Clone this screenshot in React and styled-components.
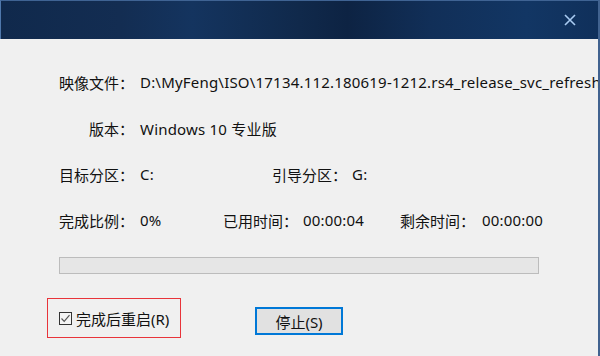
import React from 'react';
import styled, { createGlobalStyle } from 'styled-components';

const Global = createGlobalStyle`
  html, body {
    margin: 0;
    padding: 0;
    background: #f0f0f0;
  }
  body {
    font-family: "Noto Sans", "Noto Sans CJK SC", sans-serif;
    font-size: 15px;
    color: #111;
  }
`;

const Window = styled.div`
  width: 600px;
  height: 356px;
  box-sizing: border-box;
  display: flex;
  flex-direction: column;
  background: #f0f0f0;
  border-right: 2px solid #41628f;
  overflow: hidden;
`;

const TitleBar = styled.div`
  height: 39px;
  flex: none;
  box-sizing: border-box;
  display: flex;
  align-items: center;
  justify-content: flex-end;
  padding-right: 18px;
  border-top: 1px solid #3f6393;
  border-left: 1px solid #4f78ac;
  background: linear-gradient(
    90deg,
    #10294c 0%,
    #132d52 20%,
    #14345f 32%,
    #10294b 50%,
    #0d2343 58%,
    #112f58 72%,
    #123664 88%,
    #10305b 100%
  );
`;

const CloseButton = styled.button`
  width: 20px;
  height: 20px;
  padding: 0;
  border: none;
  background: transparent;
  display: flex;
  align-items: center;
  justify-content: center;
`;

const Body = styled.div`
  flex: 1;
  display: flex;
  flex-direction: column;
  padding: 20px 0 0 59px;
  overflow: hidden;
`;

const Row = styled.div`
  display: flex;
  align-items: center;
  height: 46px;
  white-space: nowrap;
`;

const Field = styled.div`
  display: flex;
  align-items: center;
  width: ${(p) => (p.$w ? `${p.$w}px` : 'auto')};
  flex: none;
`;

const Label = styled.span`
  display: inline-block;
  width: ${(p) => (p.$right ? '75px' : 'auto')};
  text-align: ${(p) => (p.$right ? 'right' : 'left')};
`;

const Value = styled.span`
  margin-left: ${(p) => p.$gap || 6}px;
  letter-spacing: 0.2px;
`;

const Progress = styled.div`
  width: 480px;
  height: 17px;
  box-sizing: border-box;
  margin-top: 14px;
  border: 1px solid #bcbcbc;
  background: #e6e6e6;
`;

const Footer = styled.div`
  display: flex;
  align-items: center;
  margin: 24px 0 0 -12px;
`;

const RestartBox = styled.label`
  width: 134px;
  height: 40px;
  box-sizing: border-box;
  border: 1px solid #e8343a;
  display: flex;
  align-items: center;
  padding-left: 11px;
  gap: 4px;
`;

const Check = styled.span`
  width: 13px;
  height: 13px;
  box-sizing: border-box;
  border: 1px solid #333;
  background: #f4f4f4;
  display: flex;
  align-items: center;
  justify-content: center;
`;

const StopButton = styled.button`
  margin-left: 74px;
  margin-top: 6px;
  width: 88px;
  height: 28px;
  box-sizing: border-box;
  border: 2px solid #0078d7;
  background: #e1e1e1;
  font-family: inherit;
  font-size: 15px;
  color: #111;
  padding: 0;
`;

export default function App() {
  return (
    <>
      <Global />
      <Window>
        <TitleBar>
          <CloseButton>
            <svg width="12" height="12" viewBox="0 0 12 12">
              <path d="M1 1 L11 11 M11 1 L1 11" stroke="#a9cbf2" strokeWidth="1.6" />
            </svg>
          </CloseButton>
        </TitleBar>
        <Body>
          <Row>
            <Field>
              <Label $right>映像文件：</Label>
              <Value>D:\MyFeng\ISO\17134.112.180619-1212.rs4_release_svc_refresh</Value>
            </Field>
          </Row>
          <Row>
            <Field>
              <Label $right>版本：</Label>
              <Value>Windows 10 专业版</Value>
            </Field>
          </Row>
          <Row>
            <Field $w={213}>
              <Label $right>目标分区：</Label>
              <Value>C:</Value>
            </Field>
            <Field>
              <Label>引导分区：</Label>
              <Value $gap={5}>G:</Value>
            </Field>
          </Row>
          <Row>
            <Field $w={164}>
              <Label $right>完成比例：</Label>
              <Value>0%</Value>
            </Field>
            <Field $w={177}>
              <Label>已用时间：</Label>
              <Value $gap={5}>00:00:04</Value>
            </Field>
            <Field>
              <Label>剩余时间：</Label>
              <Value $gap={7}>00:00:00</Value>
            </Field>
          </Row>
          <Progress />
          <Footer>
            <RestartBox>
              <Check>
                <svg width="11" height="11" viewBox="0 0 11 11">
                  <path d="M1.5 5.5 L4.2 8.3 L9.5 2.2" stroke="#555" strokeWidth="1.2" fill="none" />
                </svg>
              </Check>
              <span>完成后重启(R)</span>
            </RestartBox>
            <StopButton>停止(S)</StopButton>
          </Footer>
        </Body>
      </Window>
    </>
  );
}
